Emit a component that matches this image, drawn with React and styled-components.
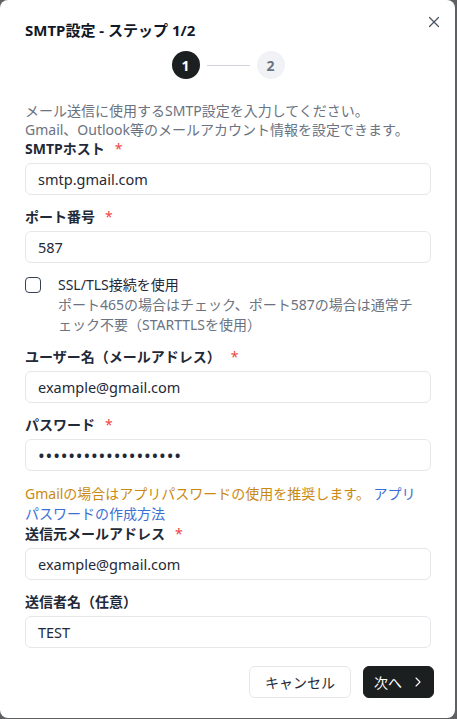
import React from "react"
import styled, { createGlobalStyle } from "styled-components"
import { X, ChevronRight } from "lucide-react"

const GlobalStyle = createGlobalStyle`
  body {
    margin: 0;
    background: #5f6062;
    font-family: "Noto Sans", "Noto Sans CJK JP", sans-serif;
  }
`

const fields = [
  { label: "SMTPホスト", value: "smtp.gmail.com", required: true },
  { label: "ポート番号", value: "587", required: true },
]

const App = () => {
  return (
    <>
      <GlobalStyle />
      <Dialog>
        <Close aria-label="close">
          <X size={18} strokeWidth={1.6} />
        </Close>
        <Title>SMTP設定 - ステップ 1/2</Title>
        <Steps>
          <Step $active>1</Step>
          <StepLine />
          <Step>2</Step>
        </Steps>
        <Description>
          メール送信に使用するSMTP設定を入力してください。
          <br />
          Gmail、Outlook等のメールアカウント情報を設定できます。
        </Description>

        {fields.map((f) => (
          <Field key={f.label}>
            <Label>
              {f.label}
              {f.required && <Req>*</Req>}
            </Label>
            <Input defaultValue={f.value} />
          </Field>
        ))}

        <CheckRow>
          <Box />
          <CheckText>
            <CheckLabel>SSL/TLS接続を使用</CheckLabel>
            <Hint>ポート465の場合はチェック、ポート587の場合は通常チェック不要（STARTTLSを使用）</Hint>
          </CheckText>
        </CheckRow>

        <Field>
          <Label>
            ユーザー名（メールアドレス）<Req>*</Req>
          </Label>
          <Input defaultValue="example@gmail.com" />
        </Field>

        <Field>
          <Label>
            パスワード<Req>*</Req>
          </Label>
          <Input type="password" $secret defaultValue="abcdefghijklmnopqrs" />
        </Field>

        <Warning>
          Gmailの場合はアプリパスワードの使用を推奨します。 <HelpLink href="#">アプリパスワードの作成方法</HelpLink>
        </Warning>

        <Field>
          <Label>
            送信元メールアドレス<Req>*</Req>
          </Label>
          <Input defaultValue="example@gmail.com" />
        </Field>

        <Field $last>
          <Label>送信者名（任意）</Label>
          <Input defaultValue="TEST" />
        </Field>

        <Footer>
          <Button>キャンセル</Button>
          <Button $primary>
            次へ <ChevronRight size={16} strokeWidth={1.6} />
          </Button>
        </Footer>
      </Dialog>
    </>
  )
}

export default App

const Dialog = styled.div`
  position: relative;
  box-sizing: border-box;
  width: 455px;
  height: 718px;
  padding: 20px 24px 0 25px;
  background: #fff;
  border-radius: 8px;
  display: flex;
  flex-direction: column;
`

const Close = styled.button`
  position: absolute;
  top: 12px;
  right: 11px;
  width: 20px;
  height: 20px;
  padding: 0;
  border: none;
  background: none;
  color: #4b5563;
  display: flex;
  align-items: center;
  justify-content: center;
`

const Title = styled.h2`
  margin: 0;
  font-size: 15px;
  line-height: 20px;
  font-weight: 700;
  color: #111827;
`

const Steps = styled.div`
  margin-top: 11px;
  display: flex;
  align-items: center;
  justify-content: center;
  gap: 7px;
`

const Step = styled.div`
  width: 28px;
  height: 28px;
  border-radius: 50%;
  display: flex;
  align-items: center;
  justify-content: center;
  font-size: 14px;
  font-weight: 700;
  background: ${(p) => (p.$active ? "#1c1f1f" : "#f1f2f5")};
  color: ${(p) => (p.$active ? "#fff" : "#6b7280")};
`

const StepLine = styled.div`
  width: 43px;
  height: 1px;
  background: #d1d5db;
`

const Description = styled.p`
  margin: 22px 0 0;
  font-size: 14px;
  line-height: 19px;
  color: #6b7280;
`

const Field = styled.div`
  display: flex;
  flex-direction: column;
  margin-bottom: ${(p) => (p.$last ? 0 : 12)}px;
`

const Label = styled.label`
  display: flex;
  align-items: center;
  margin-bottom: 4px;
  font-size: 14px;
  line-height: 20px;
  font-weight: 700;
  color: #1f2937;
`

const Req = styled.span`
  margin-left: 10px;
  color: #ef4444;
  font-weight: 400;
`

const Input = styled.input`
  box-sizing: border-box;
  width: 100%;
  height: 32px;
  padding: 0 12px;
  border: 1px solid #e5e7eb;
  border-radius: 6px;
  background: #fff;
  font-family: inherit;
  font-size: ${(p) => (p.$secret ? "18px" : "14.5px")};
  letter-spacing: ${(p) => (p.$secret ? "0.8px" : "0")};
  color: #1f2937;
  outline: none;
`

const CheckRow = styled.div`
  display: flex;
  align-items: flex-start;
  gap: 17px;
  margin-bottom: 12px;
`

const Box = styled.div`
  box-sizing: border-box;
  flex: none;
  width: 16px;
  height: 16px;
  margin-top: 2px;
  border: 1.5px solid #374151;
  border-radius: 4px;
`

const CheckText = styled.div`
  width: 366px;
  font-size: 14px;
  line-height: 20px;
`

const CheckLabel = styled.div`
  color: #1f2937;
`

const Hint = styled.div`
  color: #6b7280;
`

const Warning = styled.p`
  margin: 1px 0 0;
  padding-right: 8px;
  font-size: 14px;
  line-height: 20px;
  color: #c98a12;
`

const HelpLink = styled.a`
  color: #3b6fd3;
  text-decoration: none;
`

const Footer = styled.div`
  display: flex;
  justify-content: flex-end;
  gap: 12px;
  margin-top: 18px;
  margin-right: -3px;
`

const Button = styled.button`
  box-sizing: border-box;
  height: 32px;
  display: flex;
  align-items: center;
  gap: 8px;
  padding: ${(p) => (p.$primary ? "0 7px 0 10px" : "0 15px")};
  border: 1px solid ${(p) => (p.$primary ? "#1c1f1f" : "#e5e7eb")};
  border-radius: 6px;
  background: ${(p) => (p.$primary ? "#1c1f1f" : "#fff")};
  color: ${(p) => (p.$primary ? "#fff" : "#1f2937")};
  font-family: inherit;
  font-size: 14px;
`
